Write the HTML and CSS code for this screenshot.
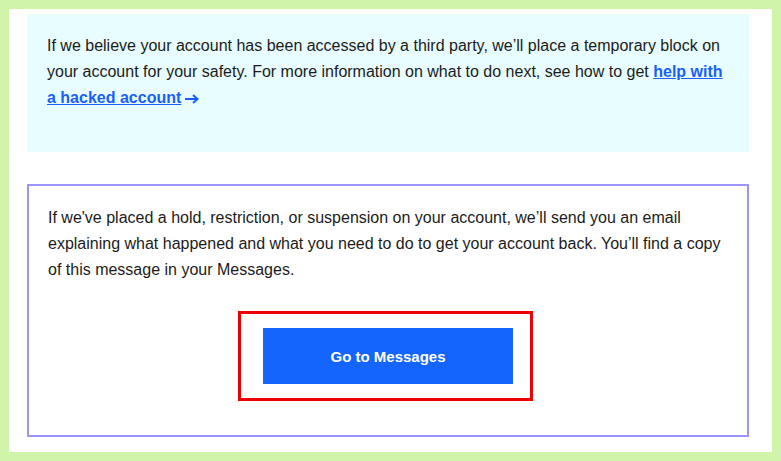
FILE: index.html
```html
<!DOCTYPE html>
<html>
<head>
    <title>Account help</title>
    <link rel="stylesheet" href="styles.css">
</head>
<body>
    <div class="page">
        <div class="notice">
            <p>If we believe your account has been accessed by a third party, we’ll place a temporary block on your account for your safety. For more information on what to do next, see how to get <a href="#" class="link">help with a hacked account</a><svg class="arrow" width="14" height="10" viewBox="0 0 14 10"><path d="M0 5H12M8 1L12.5 5L8 9" fill="none" stroke="#1a5ffe" stroke-width="2"/></svg></p>
        </div>
        <div class="card">
            <p>If we've placed a hold, restriction, or suspension on your account, we’ll send you an email explaining what happened and what you need to do to get your account back. You’ll find a copy of this message in your Messages.</p>
            <div class="actions">
                <div class="highlight">
                    <a href="#" class="btn">Go to Messages</a>
                </div>
            </div>
        </div>
    </div>
</body>
</html>
```

FILE: styles.css
```css
html, body {
    margin: 0;
    height: 100%;
}
body {
    background-color: #d0f4a9;
    padding: 9px;
    box-sizing: border-box;
    font-family: "Liberation Sans", Arial, sans-serif;
    font-size: 16px;
    color: #1b1b1b;
}
.page {
    background-color: white;
    height: 100%;
    box-sizing: border-box;
    padding: 5px 23px 15px 18px;
}
p {
    margin: 0;
    line-height: 26px;
}
.notice {
    background-color: #e8fdff;
    padding: 19px 20px 41px 20px;
}
.link {
    color: #1a5ffe;
    font-weight: bold;
    text-decoration: underline;
}
.arrow {
    margin-left: 4px;
    vertical-align: -1px;
}
.card {
    margin-top: 32px;
    border: 2px solid #9b94fb;
    padding: 19px 20px 34px 19px;
}
.actions {
    display: flex;
    justify-content: center;
    margin-top: 28px;
    padding-right: 4px;
}
.highlight {
    border: 3px solid #ee0000;
    padding: 14px 17px 14px 22px;
}
.btn {
    display: flex;
    align-items: center;
    justify-content: center;
    width: 250px;
    height: 56px;
    background-color: #1465fe;
    color: white;
    font-size: 15px;
    font-weight: bold;
    text-decoration: none;
}
```
